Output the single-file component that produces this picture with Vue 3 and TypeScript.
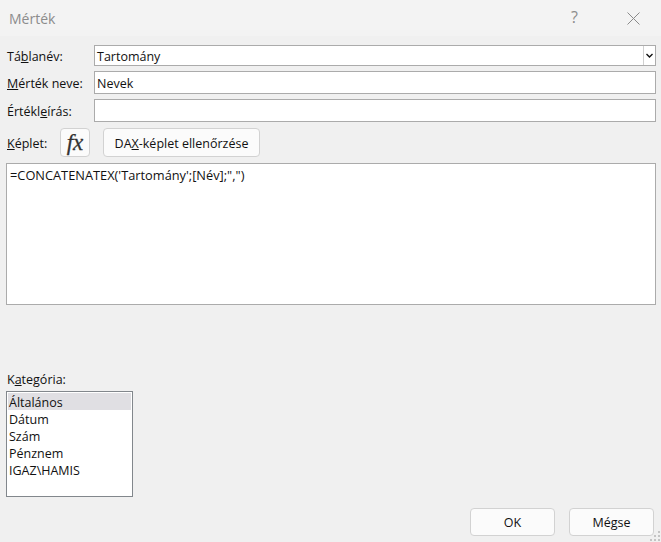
<script setup lang="ts">
const items: string[] = ['Általános', 'Dátum', 'Szám', 'Pénznem', 'IGAZ\\HAMIS']
</script>

<template>
  <div class="dialog">
    <header class="titlebar">
      <span class="title">Mérték</span>
      <span class="help">?</span>
      <svg class="close" width="13" height="13" viewBox="0 0 13 13">
        <path d="M.5.5l12 12M12.5.5l-12 12" stroke="#8a8a8a" stroke-width="1" fill="none" />
      </svg>
    </header>
    <main class="body">
      <div class="row row-table">
        <label class="label">Tá<u>b</u>lanév:</label>
        <div class="combo">
          <span class="value">Tartomány</span>
          <span class="arrow">
            <svg width="7" height="5" viewBox="0 0 7 5">
              <path d="M.5 1l3 3 3-3" stroke="#111" stroke-width="1.400" fill="none" />
            </svg>
          </span>
        </div>
      </div>
      <div class="row row-name">
        <label class="label"><u>M</u>érték neve:</label>
        <div class="input">Nevek</div>
      </div>
      <div class="row row-desc">
        <label class="label">Értékl<u>e</u>írás:</label>
        <div class="input"></div>
      </div>
      <div class="row row-formula">
        <label class="label-short"><u>K</u>éplet:</label>
        <button class="btn fx"><span class="fx-text">fx</span></button>
        <button class="btn dax">DA<u>X</u>-képlet ellenőrzése</button>
      </div>
      <div class="editor">=CONCATENATEX('Tartomány';[Név];",")</div>
      <div class="category">
        <label class="label-cat">K<u>a</u>tegória:</label>
        <ul class="list">
          <li v-for="(item, i) in items" :key="item" :class="{ selected: i === 0 }">{{ item }}</li>
        </ul>
      </div>
      <div class="actions">
        <button class="btn action">OK</button>
        <button class="btn action">Mégse</button>
      </div>
    </main>
    <svg class="grip" width="12" height="12" viewBox="0 0 12 12">
      <path d="M9 1h2v2H9zM5 5h2v2H5zM9 5h2v2H9zM1 9h2v2H1zM5 9h2v2H5zM9 9h2v2H9z" fill="#c4c4c4" />
    </svg>
  </div>
</template>

<style>
html, body { margin: 0; padding: 0; background: #f0f0f0; }
</style>

<style scoped>
.dialog {
  position: relative;
  width: 661px;
  height: 542px;
  overflow: hidden;
  background: #f0f0f0;
  color: #111;
  font-family: "Open Sans", "Noto Sans", sans-serif;
  font-size: 12.5px;
  box-sizing: border-box;
}
.titlebar {
  height: 36px;
  display: flex;
  align-items: center;
  background: #f3f3f3;
  padding-left: 9px;
}
.title { font-size: 14px; color: #8c8c8c; flex: 1; }
.help { font-size: 16px; line-height: 16px; color: #8c8c8c; margin: 0 49px 3px 0; }
.close { margin-right: 21px; }
.body {
  display: flex;
  flex-direction: column;
  padding: 9px 5px 0 6px;
}
.row { display: flex; align-items: center; }
.row-table { height: 21px; }
.row-name { height: 23px; margin-top: 5px; }
.row-desc { height: 23px; margin-top: 5px; }
.row-formula { height: 29px; margin-top: 6px; }
.label { width: 88px; flex: none; padding: 2px 0 0 1px; box-sizing: border-box; }
.label-short { width: 54px; flex: none; padding: 2px 0 0 1px; box-sizing: border-box; }
.combo, .input {
  flex: 1;
  height: 100%;
  box-sizing: border-box;
  border: 1px solid #ababab;
  background: #fff;
  display: flex;
  align-items: center;
  padding-left: 2px;
}
.value { flex: 1; padding-top: 2px; }
.input { padding-top: 2px; }
.arrow {
  width: 11px;
  height: 100%;
  border-left: 1px solid #d0d0d0;
  display: flex;
  align-items: center;
  justify-content: center;
}
.btn {
  font: inherit;
  color: #111;
  background: #fbfbfb;
  border: 1px solid #d2d2d2;
  border-radius: 4px;
  padding: 0;
  box-sizing: border-box;
}
.fx { width: 30px; height: 29px; }
.fx-text {
  font-family: "Liberation Serif", serif;
  font-style: italic;
  font-size: 23px;
  color: #333;
  -webkit-text-stroke: 0.3px #333;
}
.dax { width: 157px; height: 29px; margin-left: 13px; padding-top: 1px; }
.editor {
  margin-top: 6px;
  height: 142px;
  box-sizing: border-box;
  border: 1px solid #ababab;
  background: #fff;
  padding: 2px 3px;
  font-size: 12.8px;
}
.category { margin-top: 66px; display: flex; flex-direction: column; }
.label-cat { height: 20px; line-height: 17px; padding-left: 1px; }
.list {
  list-style: none;
  margin: 0;
  padding: 1px;
  width: 127px;
  height: 106px;
  box-sizing: border-box;
  border: 1px solid #82878c;
  background: #fff;
}
.list li { height: 17px; line-height: 19px; padding-left: 1px; }
.list li.selected { background: #e0dfe3; }
.actions {
  display: flex;
  justify-content: flex-end;
  gap: 14px;
  margin-top: 11px;
  padding-right: 2px;
}
.action { width: 85px; height: 28px; }
.grip { position: absolute; right: 0; bottom: 0; }
</style>
